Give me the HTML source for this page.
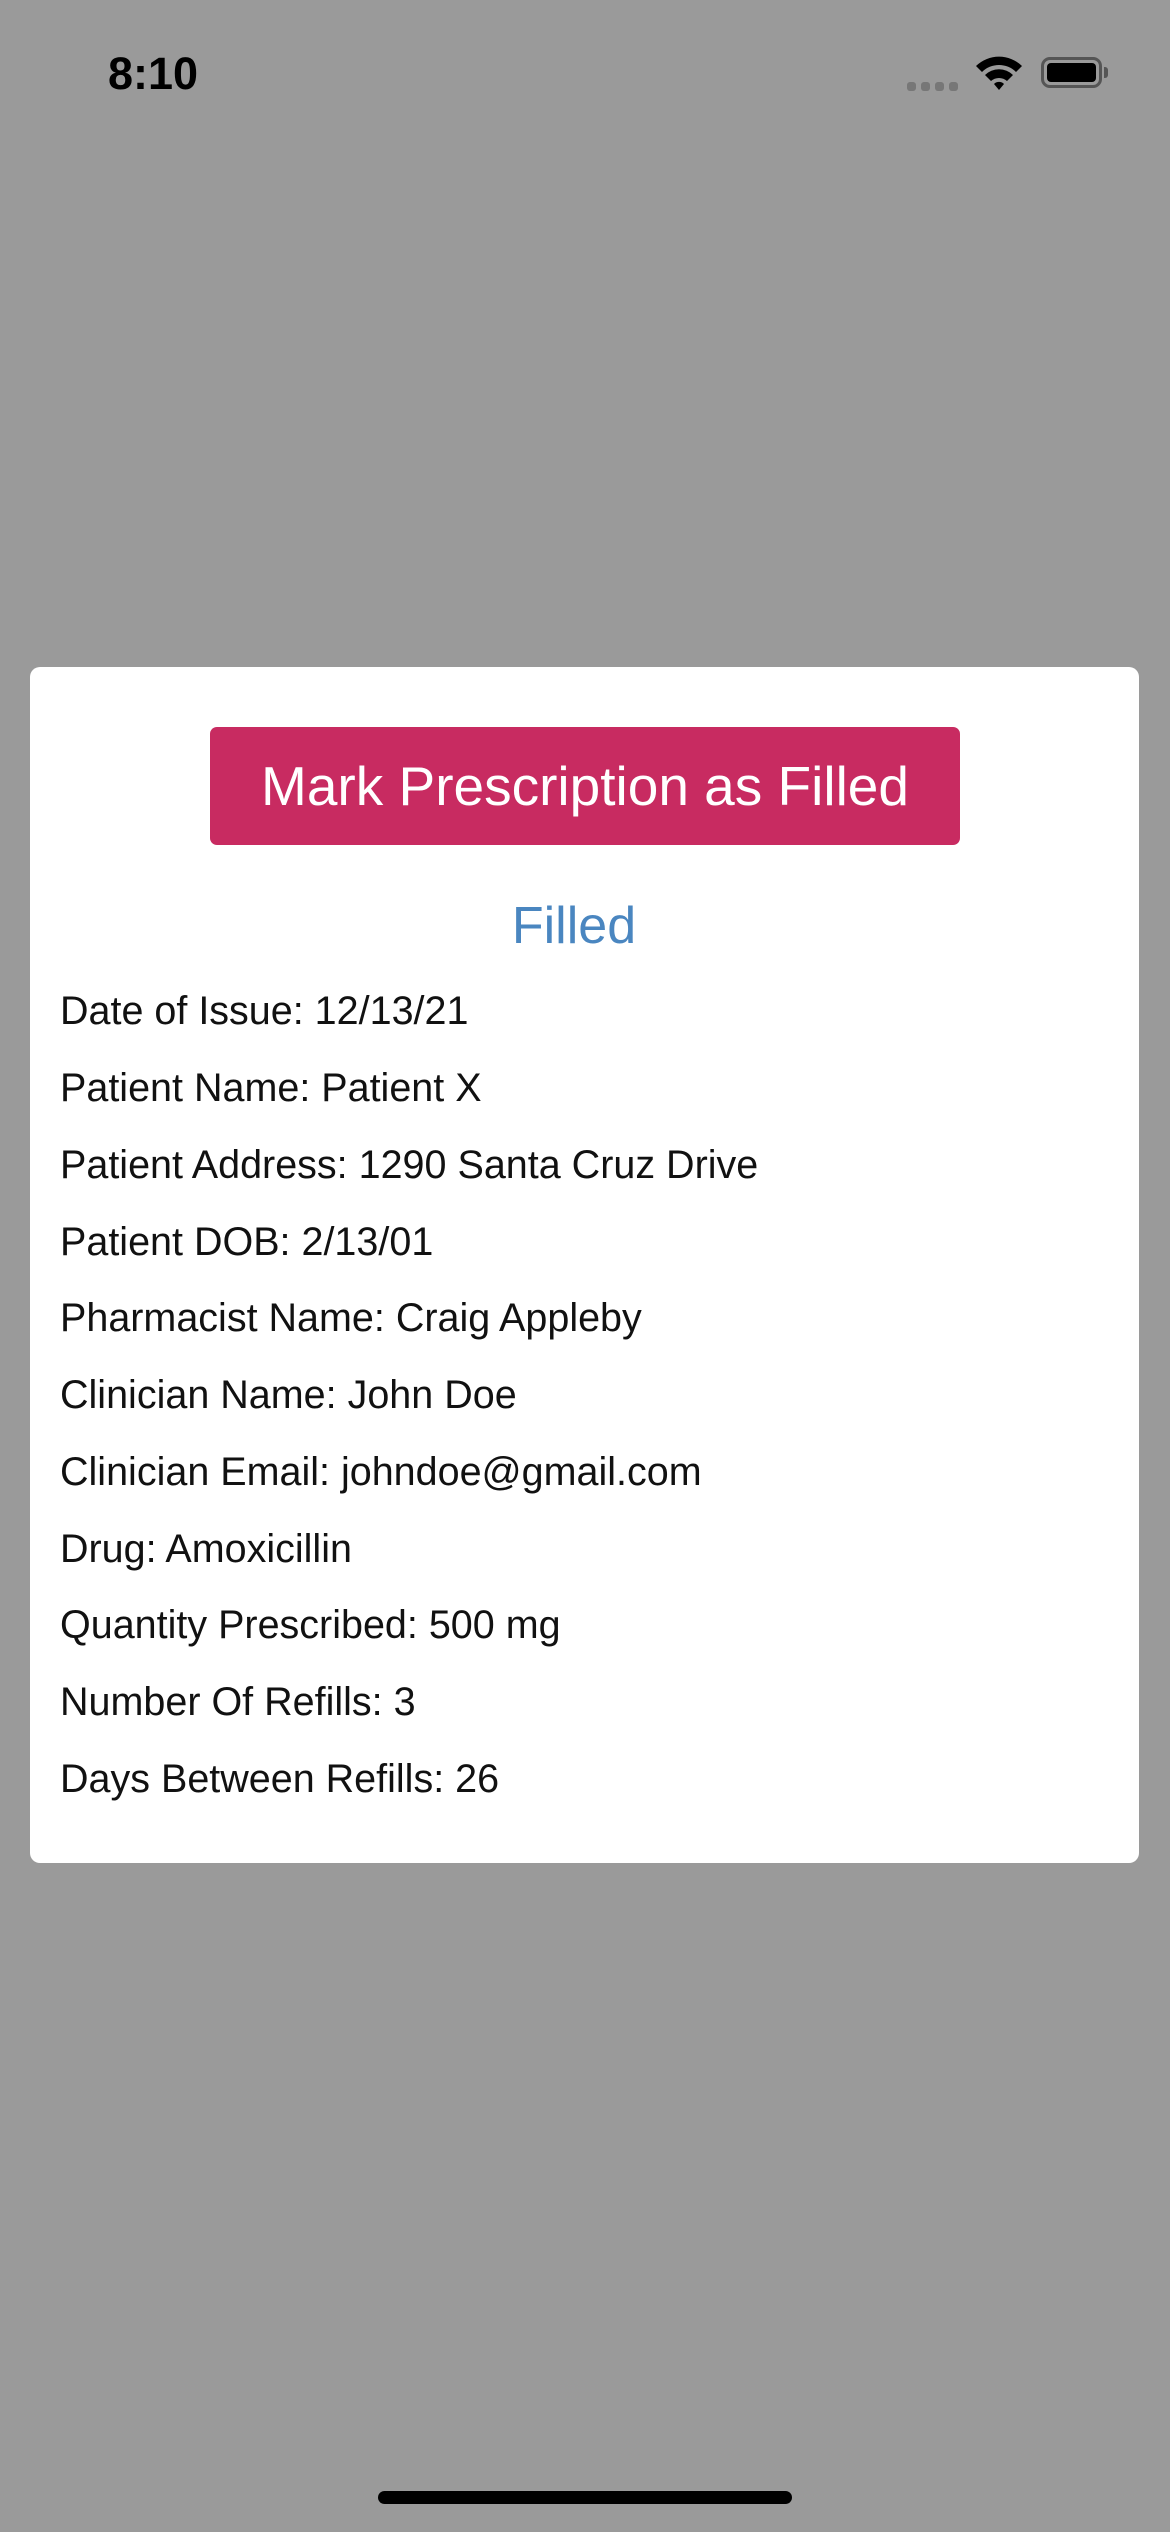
<!DOCTYPE html>
<html><head><meta charset="utf-8"><style>
html,body{margin:0;padding:0}
body{width:1170px;height:2532px;background:#9a9a9a;position:relative;overflow:hidden;font-family:"Liberation Sans",sans-serif}
.abs{position:absolute}
.card{left:30px;top:667px;width:1109px;height:1196px;background:#fff;border-radius:10px}
.btn{left:210px;top:727px;width:750px;height:118px;background:#c82b61;border-radius:7px;color:#fff;font-size:55px;line-height:118px;text-align:center}
.filled{left:0;width:1148px;top:896px;text-align:center;color:#4a86c0;font-size:52px;line-height:60px}
.line{left:60px;font-size:39.5px;color:#111;line-height:40px;white-space:nowrap}
</style></head><body>
<div class="abs" style="left:108px;top:50px;font-size:45px;font-weight:bold;line-height:48px;color:#000">8:10</div>
<div class="abs" style="left:907px;top:82px;width:51px;height:9px">
 <span class="abs" style="left:0;top:0;width:9px;height:9px;border-radius:3px;background:#777"></span>
 <span class="abs" style="left:14px;top:0;width:9px;height:9px;border-radius:3px;background:#777"></span>
 <span class="abs" style="left:28px;top:0;width:9px;height:9px;border-radius:3px;background:#777"></span>
 <span class="abs" style="left:42px;top:0;width:9px;height:9px;border-radius:3px;background:#777"></span>
</div>
<svg class="abs" style="left:974px;top:54px" width="50" height="38" viewBox="0 0 50 38">
 <path d="M2 12 A33 33 0 0 1 48 12 L42 18 A24 24 0 0 0 8 18 Z" fill="#000"/>
 <path d="M11 21 A20 20 0 0 1 39 21 L33 27 A12 12 0 0 0 17 27 Z" fill="#000"/>
 <path d="M20 30 A7 7 0 0 1 30 30 L25 36 Z" fill="#000"/>
</svg>
<div class="abs" style="left:1041px;top:57px;width:61px;height:31px;border:3px solid #555;border-radius:9px;box-sizing:border-box"></div>
<div class="abs" style="left:1047px;top:63px;width:49px;height:19px;background:#000;border-radius:4px"></div>
<div class="abs" style="left:1104px;top:67px;width:4px;height:11px;background:#555;border-radius:0 3px 3px 0"></div>

<div class="abs card"></div>
<div class="abs btn">Mark Prescription as Filled</div>
<div class="abs filled">Filled</div>
<div class="abs line" style="top:991px">Date of Issue: 12/13/21</div>
<div class="abs line" style="top:1068px">Patient Name: Patient X</div>
<div class="abs line" style="top:1145px">Patient Address: 1290 Santa Cruz Drive</div>
<div class="abs line" style="top:1222px">Patient DOB: 2/13/01</div>
<div class="abs line" style="top:1298px">Pharmacist Name: Craig Appleby</div>
<div class="abs line" style="top:1375px">Clinician Name: John Doe</div>
<div class="abs line" style="top:1452px">Clinician Email: johndoe@gmail.com</div>
<div class="abs line" style="top:1529px">Drug: Amoxicillin</div>
<div class="abs line" style="top:1605px">Quantity Prescribed: 500 mg</div>
<div class="abs line" style="top:1682px">Number Of Refills: 3</div>
<div class="abs line" style="top:1759px">Days Between Refills: 26</div>

<div class="abs" style="left:378px;top:2491px;width:414px;height:13px;background:#000;border-radius:7px"></div>
</body></html>
